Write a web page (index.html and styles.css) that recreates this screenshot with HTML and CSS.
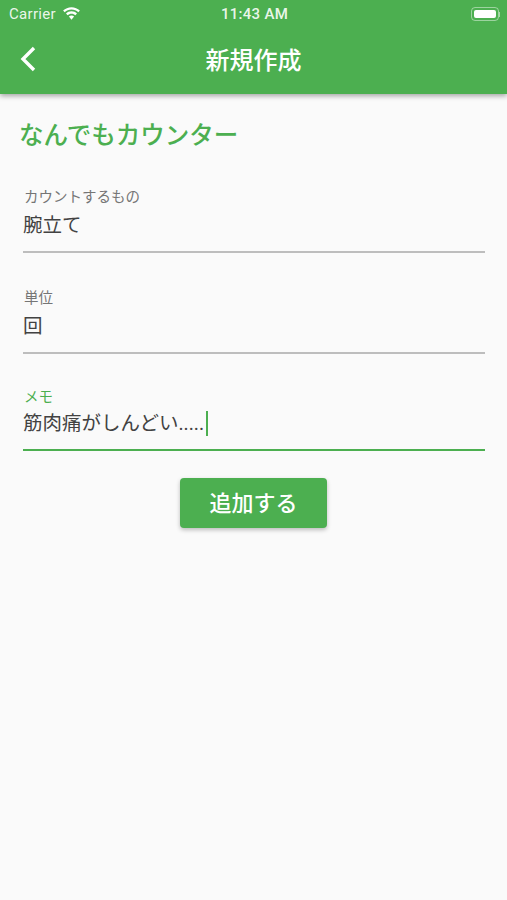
FILE: index.html
```html
<!DOCTYPE html>
<html lang="ja">
<head>
    <meta charset="UTF-8">
    <meta name="viewport" content="width=device-width, initial-scale=1.0">
    <title>新規作成</title>
    <link rel="stylesheet" href="styles.css">
</head>
<body>
    <header class="app-header">
        <div class="status-bar">
            <div class="status-left">
                <span>Carrier</span>
                <svg class="wifi" width="19" height="14" viewBox="0 0 19 14">
                    <path d="M9.5 2.6c2.6 0 5 1 6.8 2.7l1.6-1.7C15.700 1.500 12.700 .2 9.500 .2S3.300 1.500 1.100 3.600l1.600 1.700C4.500 3.600 6.900 2.600 9.500 2.600z" fill="#fff"/>
                    <path d="M9.500 6.700c1.500 0 2.900 .6 3.900 1.500l1.600-1.700C13.600 5.100 11.600 4.300 9.500 4.300s-4.100 .8-5.500 2.200l1.600 1.700c1-.9 2.400-1.500 3.900-1.500z" fill="#fff"/>
                    <path d="M9.500 8.500c-1 0-1.900 .4-2.600 1l2.600 3.200 2.600-3.200c-.7-.6-1.600-1-2.600-1z" fill="#fff"/>
                </svg>
            </div>
            <span class="status-time">11:43 AM</span>
            <div class="battery">
                <div class="battery-body"><div class="battery-level"></div></div>
                <div class="battery-cap"></div>
            </div>
        </div>
        <div class="nav-bar">
            <svg class="back-icon" width="18" height="26" viewBox="0 0 18 26">
                <path d="M15 2 L4 13 L15 24" fill="none" stroke="#fff" stroke-width="3.400"/>
            </svg>
            <h1>新規作成</h1>
        </div>
    </header>

    <main class="content">
        <h2>なんでもカウンター</h2>

        <div class="field field-first">
            <label>カウントするもの</label>
            <div class="value">腕立て</div>
        </div>
        <div class="field">
            <label>単位</label>
            <div class="value">回</div>
        </div>
        <div class="field focused">
            <label>メモ</label>
            <div class="value">筋肉痛がしんどい.....<span class="caret"></span></div>
        </div>

        <button class="btn">追加する</button>
    </main>
</body>
</html>
```

FILE: styles.css
```css
* {
    box-sizing: border-box;
    margin: 0;
    padding: 0;
}

body {
    background-color: #fafafa;
    font-family: "Roboto", "Noto Sans CJK JP", sans-serif;
    min-height: 100vh;
}

.app-header {
    background-color: #4caf50;
    height: 94px;
    color: white;
    box-shadow: 0 2px 5px rgba(0, 0, 0, 0.35);
}

.status-bar {
    display: grid;
    grid-template-columns: 1fr auto 1fr;
    align-items: center;
    height: 28px;
    padding: 0 7px 0 9px;
    font-size: 15px;
    color: rgba(255, 255, 255, 0.9);
}

.status-left {
    display: flex;
    align-items: center;
    gap: 6px;
    letter-spacing: 0.3px;
}

.status-time {
    font-weight: 500;
    letter-spacing: 0.3px;
}

.battery {
    display: flex;
    align-items: center;
    justify-content: flex-end;
}

.battery-body {
    width: 28px;
    height: 14px;
    padding: 2px;
    border: 1px solid rgba(255, 255, 255, 0.45);
    border-radius: 4px;
}

.battery-level {
    height: 100%;
    background-color: white;
    border-radius: 2px;
}

.battery-cap {
    width: 1px;
    height: 5px;
    background-color: rgba(255, 255, 255, 0.5);
}

.nav-bar {
    display: flex;
    align-items: center;
    justify-content: center;
    position: relative;
    height: 66px;
}

.back-icon {
    position: absolute;
    left: 19px;
    top: 18px;
}

.nav-bar h1 {
    font-size: 24px;
    font-weight: 500;
    line-height: 32px;
}

.content {
    display: flex;
    flex-direction: column;
    padding: 26px 22px 0 23px;
}

.content h2 {
    margin-left: -4px;
    color: #4caf50;
    font-size: 24.5px;
    font-weight: 500;
    line-height: 32px;
}

.field {
    height: 101px;
    padding-top: 36px;
    border-bottom: 2px solid #bdbdbd;
}

.field-first {
    height: 99px;
    padding-top: 34px;
    margin-top: 2px;
}

.field label {
    display: block;
    margin-left: 1px;
    color: #757575;
    font-size: 14.500px;
    line-height: 20px;
}

.field .value {
    margin-top: 3px;
    color: #424242;
    font-size: 19.500px;
    line-height: 30px;
}

.focused {
    height: 97px;
    padding-top: 34px;
    border-bottom-color: #4caf50;
}

.focused label {
    color: #4caf50;
}

.field.focused .value {
    margin-top: 1px;
}

.caret {
    display: inline-block;
    width: 2px;
    height: 25px;
    margin-left: 2px;
    background-color: #4caf50;
    vertical-align: -6px;
}

.btn {
    align-self: center;
    width: 147px;
    height: 50px;
    margin-top: 27px;
    margin-left: -1px;
    padding-bottom: 4px;
    border: none;
    border-radius: 4px;
    background-color: #4caf50;
    color: white;
    font-family: inherit;
    font-size: 22px;
    font-weight: 500;
    box-shadow: 0 2px 4px rgba(0, 0, 0, 0.25);
}
```
